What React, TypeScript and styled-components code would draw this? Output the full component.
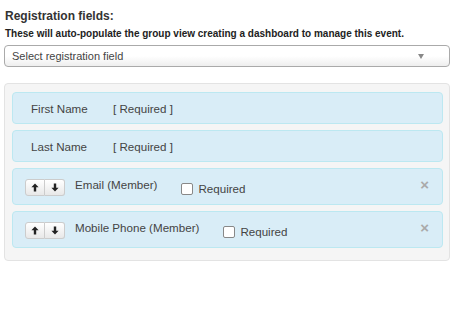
import React from 'react'
import styled, { createGlobalStyle } from 'styled-components'

const GlobalStyle = createGlobalStyle`
  body {
    margin: 0;
    background: #fff;
    font-family: "Liberation Sans", Arial, Helvetica, sans-serif;
    color: #333;
  }
`

const Page = styled.div`
  width: 446px;
  padding: 8px 0 0 4px;
`

const Heading = styled.h3`
  margin: 0 0 0 1px;
  font-size: 12px;
  line-height: 16px;
  font-weight: bold;
  color: #333;
`

const Hint = styled.p`
  margin: 3px 0 0 1px;
  font-size: 10px;
  line-height: 13px;
  font-weight: bold;
  color: #222;
`

const SelectBox = styled.div`
  margin-top: 5px;
  height: 20px;
  border: 1px solid #aaa;
  border-radius: 4px;
  background: linear-gradient(#fff 0%, #fff 50%, #eee 100%);
  display: flex;
  align-items: center;
  justify-content: space-between;
  padding: 0 12px 0 7px;
  font-size: 11px;
  color: #444;
`

const Caret = styled.span`
  width: 0;
  height: 0;
  border-left: 3.5px solid transparent;
  border-right: 3.5px solid transparent;
  border-top: 5px solid #888;
  margin-right: 13px;
`

const Well = styled.div`
  margin-top: 16px;
  padding: 8px 6px 12px 7px;
  background: #f5f5f5;
  border: 1px solid #e3e3e3;
  border-radius: 4px;
  display: flex;
  flex-direction: column;
  gap: 6px;
`

const Item = styled.div<{ $tall?: boolean }>`
  height: ${p => (p.$tall ? 35 : 30)}px;
  background: #d9edf7;
  border: 1px solid #bce8f1;
  border-radius: 4px;
  display: flex;
  align-items: center;
  padding: ${p => (p.$tall ? '0 12px 0 12px' : '0 12px 0 18px')};
  font-size: 11.6px;
  color: #444;
`

const FixedName = styled.span`
  width: 82px;
`

const BtnGroup = styled.div`
  display: flex;
  margin-top: 2px;
`

const ArrowBtn = styled.button`
  width: 20px;
  height: 17px;
  padding: 0;
  border: 1px solid #ccc;
  background: linear-gradient(#fff, #e8e8e8);
  display: flex;
  align-items: center;
  justify-content: center;
  &:first-child {
    border-radius: 3px 0 0 3px;
  }
  &:last-child {
    border-radius: 0 3px 3px 0;
    border-left: none;
  }
`

const FieldName = styled.span`
  margin-left: 10px;
  margin-top: -4px;
`

const ReqLabel = styled.label`
  margin-left: 24px;
  display: flex;
  align-items: center;
  gap: 5px;
  margin-top: 4px;
`

const Box = styled.span`
  width: 10px;
  height: 10px;
  border: 1px solid #888;
  border-radius: 2px;
  background: #fff;
`

const Close = styled.span`
  margin-left: auto;
  margin-right: 1px;
  margin-top: -4px;
  font-size: 15px;
  font-weight: bold;
  color: #aaa;
`

const Arrow = ({ down }: { down?: boolean }) => (
  <svg width="8" height="9" viewBox="0 0 8 9" style={{ transform: down ? 'rotate(180deg)' : undefined }}>
    <path d="M4 0.5 L7.6 4.2 L5.2 4.2 L5.2 8.5 L2.8 8.5 L2.8 4.2 L0.4 4.2 Z" fill="#222" />
  </svg>
)

const fixed = ['First Name', 'Last Name']
const custom = ['Email (Member)', 'Mobile Phone (Member)']

export default function App() {
  return (
    <Page>
      <GlobalStyle />
      <Heading>Registration fields:</Heading>
      <Hint>These will auto-populate the group view creating a dashboard to manage this event.</Hint>
      <SelectBox>
        Select registration field
        <Caret />
      </SelectBox>
      <Well>
        {fixed.map(f => (
          <Item key={f}>
            <FixedName>{f}</FixedName>
            <span>[ Required ]</span>
          </Item>
        ))}
        {custom.map(f => (
          <Item key={f} $tall>
            <BtnGroup>
              <ArrowBtn><Arrow /></ArrowBtn>
              <ArrowBtn><Arrow down /></ArrowBtn>
            </BtnGroup>
            <FieldName>{f}</FieldName>
            <ReqLabel>
              <Box />
              Required
            </ReqLabel>
            <Close>×</Close>
          </Item>
        ))}
      </Well>
    </Page>
  )
}
